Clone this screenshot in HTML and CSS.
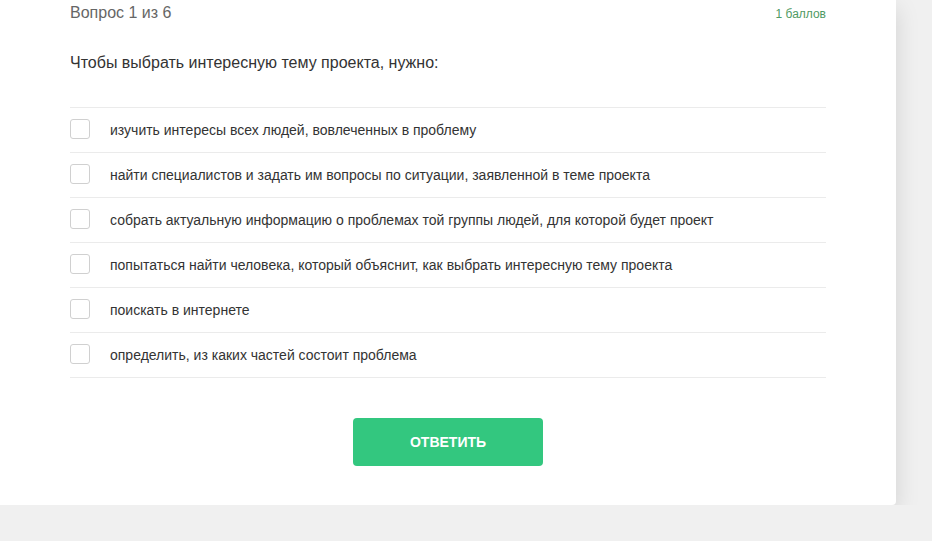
FILE: index.html
```html
<!DOCTYPE html>
<html lang="ru">
<head>
    <meta charset="UTF-8">
    <meta name="viewport" content="width=device-width, initial-scale=1.0">
    <title>Тест</title>
    <link rel="stylesheet" href="styles.css">
</head>
<body>
    <div class="quiz-card">
        <div class="quiz-header">
            <span class="quiz-counter">Вопрос 1 из 6</span>
            <span class="quiz-points">1 баллов</span>
        </div>

        <div class="quiz-question">Чтобы выбрать интересную тему проекта, нужно:</div>

        <ul class="quiz-options">
            <li class="quiz-option"><span class="checkbox"></span><span>изучить интересы всех людей, вовлеченных в проблему</span></li>
            <li class="quiz-option"><span class="checkbox"></span><span>найти специалистов и задать им вопросы по ситуации, заявленной в теме проекта</span></li>
            <li class="quiz-option"><span class="checkbox"></span><span>собрать актуальную информацию о проблемах той группы людей, для которой будет проект</span></li>
            <li class="quiz-option"><span class="checkbox"></span><span>попытаться найти человека, который объяснит, как выбрать интересную тему проекта</span></li>
            <li class="quiz-option"><span class="checkbox"></span><span>поискать в интернете</span></li>
            <li class="quiz-option"><span class="checkbox"></span><span>определить, из каких частей состоит проблема</span></li>
        </ul>

        <div class="quiz-actions">
            <button class="answer-btn">Ответить</button>
        </div>
    </div>
</body>
</html>
```

FILE: styles.css
```css
body {
    margin: 0;
    background: #f0f0f0;
    font-family: "Liberation Sans", Arial, sans-serif;
    color: #333;
}
.quiz-card {
    width: 896px;
    box-sizing: border-box;
    background: white;
    padding: 1px 70px 39px;
    border-radius: 0 0 4px 0;
    box-shadow: 0 8px 24px rgba(0,0,0,0.13);
}
.quiz-header {
    display: flex;
    justify-content: space-between;
    align-items: center;
    height: 24px;
}
.quiz-counter {
    font-size: 16px;
    color: #666;
}
.quiz-points {
    font-size: 12px;
    color: #4f9a63;
    padding-top: 1px;
}
.quiz-question {
    margin-top: 26px;
    font-size: 16px;
    line-height: 24px;
    color: #333;
}
.quiz-options {
    list-style: none;
    margin: 32px 0 0;
    padding: 0;
    border-top: 1px solid #ebebeb;
}
.quiz-option {
    display: flex;
    align-items: center;
    height: 44px;
    border-bottom: 1px solid #ebebeb;
    font-size: 14px;
    color: #333;
}
.checkbox {
    width: 20px;
    height: 20px;
    box-sizing: border-box;
    border: 1px solid #d0d0d0;
    border-radius: 3px;
    margin: -2px 20px 0 0;
    flex-shrink: 0;
}
.quiz-actions {
    display: flex;
    justify-content: center;
    margin-top: 40px;
}
.answer-btn {
    width: 190px;
    height: 48px;
    background: #33c77f;
    color: white;
    border: none;
    border-radius: 4px;
    font-family: "Liberation Sans", Arial, sans-serif;
    font-size: 14px;
    font-weight: bold;
    text-transform: uppercase;
    cursor: pointer;
}
```
